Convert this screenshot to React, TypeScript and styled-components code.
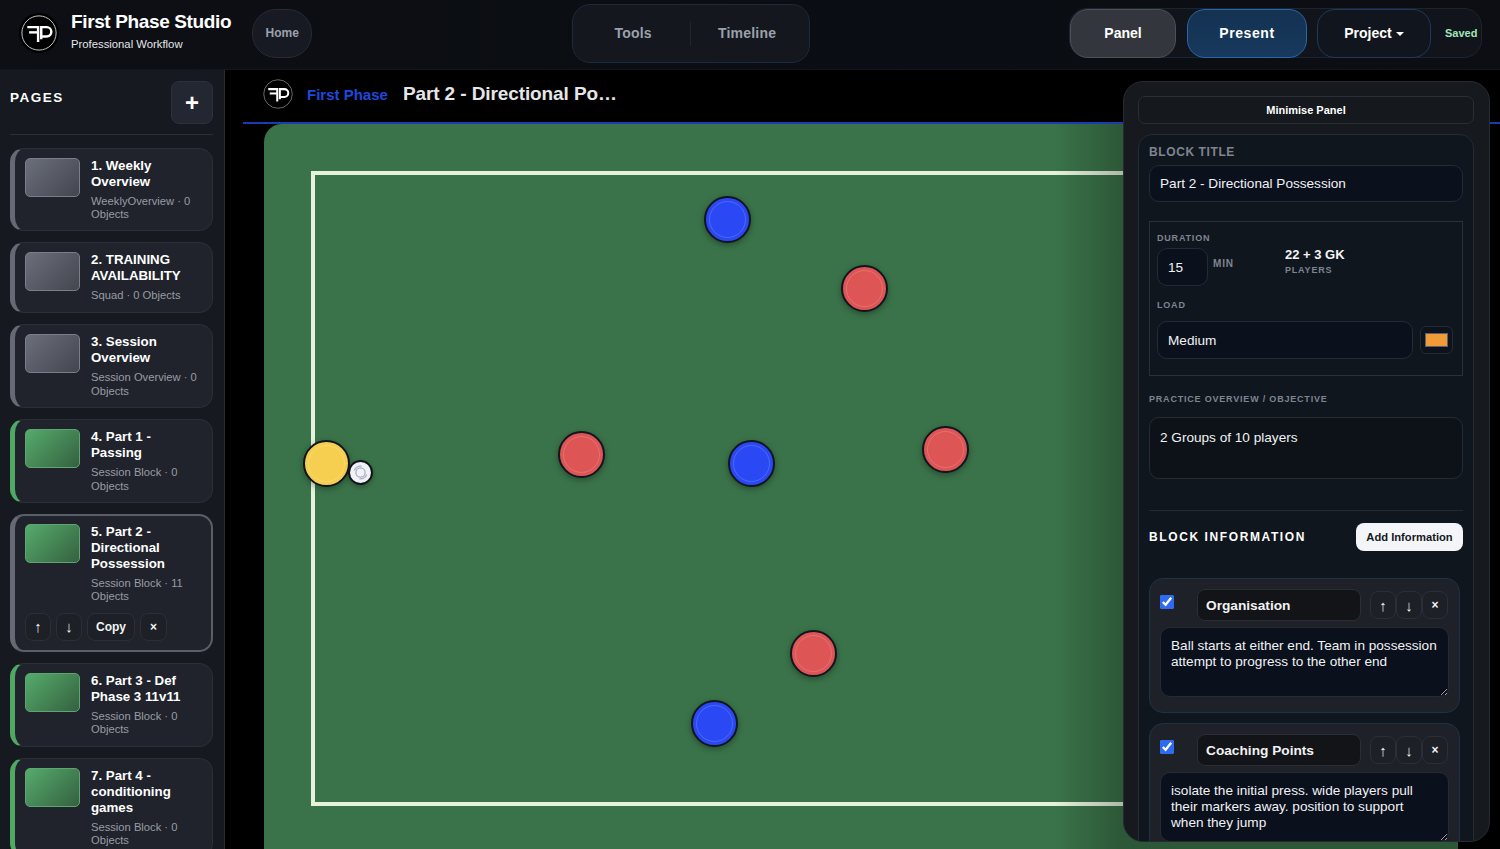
import React from "react";
import styled, { createGlobalStyle } from "styled-components";

const GlobalStyle = createGlobalStyle`
  * {
    box-sizing: border-box;
  }
  html,
  body {
    margin: 0;
    height: 100%;
    overflow: hidden;
    background: #000;
    font-family: "Liberation Sans", Arial, sans-serif;
    color: #fff;
  }
`;

interface IPage {
  title: string;
  meta: string;
  kind: "grey" | "green";
  selected?: boolean;
}

interface IToken {
  kind: "red" | "blue" | "yellow";
  x: number;
  y: number;
}

const pages: IPage[] = [
  { title: "1. Weekly Overview", meta: "WeeklyOverview · 0 Objects", kind: "grey" },
  { title: "2. TRAINING AVAILABILITY", meta: "Squad · 0 Objects", kind: "grey" },
  { title: "3. Session Overview", meta: "Session Overview · 0 Objects", kind: "grey" },
  { title: "4. Part 1 - Passing", meta: "Session Block · 0 Objects", kind: "green" },
  {
    title: "5. Part 2 - Directional Possession",
    meta: "Session Block · 11 Objects",
    kind: "green",
    selected: true,
  },
  { title: "6. Part 3 - Def Phase 3 11v11", meta: "Session Block · 0 Objects", kind: "green" },
  { title: "7. Part 4 - conditioning games", meta: "Session Block · 0 Objects", kind: "green" },
];

// positions are relative to the board's top left corner
const tokens: IToken[] = [
  { kind: "blue", x: 463, y: 95 },
  { kind: "red", x: 600, y: 164 },
  { kind: "red", x: 317, y: 330 },
  { kind: "blue", x: 487, y: 339 },
  { kind: "red", x: 681, y: 325 },
  { kind: "red", x: 549, y: 529 },
  { kind: "blue", x: 450, y: 599 },
  { kind: "yellow", x: 62, y: 339 },
];

const tokenColors = { red: "#dd5555", blue: "#2a49f5", yellow: "#f6cf50" };

const Page = styled.div`
  display: flex;
  flex-direction: column;
  width: 1500px;
  height: 849px;
  overflow: hidden;
`;

const TopBar = styled.header`
  display: flex;
  align-items: center;
  justify-content: space-between;
  flex: 0 0 70px;
  padding: 0 18px 3px 19px;
  background: linear-gradient(90deg, #0d0f14, #0a0d13 60%, #0c0e13);
  border-bottom: 1px solid #12161e;
`;

const Brand = styled.div`
  display: flex;
  align-items: center;
`;

const LogoDisc = styled.div<{ $size: number; $ring: number }>`
  display: flex;
  align-items: center;
  justify-content: center;
  flex: none;
  width: ${(p) => p.$size}px;
  height: ${(p) => p.$size}px;
  border-radius: 50%;
  background: #000;
  padding: ${(p) => p.$ring}px;
`;

const BrandText = styled.div`
  display: flex;
  flex-direction: column;
  margin: -5px 0 0 12px;
`;

const BrandName = styled.div`
  font-size: 19px;
  font-weight: 700;
  line-height: 24px;
  letter-spacing: -0.37px;
`;

const BrandSub = styled.div`
  margin-top: 3px;
  font-size: 11.3px;
  line-height: 15px;
  color: #e4e6ea;
`;

const HomeButton = styled.button`
  width: 60px;
  height: 49px;
  margin-left: 21px;
  padding: 0;
  border: 1px solid #262b35;
  border-radius: 24px;
  background: #171a22;
  color: #9ba1ad;
  font: 700 12px "Liberation Sans", sans-serif;
`;

const CenterTabs = styled.div`
  display: flex;
  align-items: center;
  width: 238px;
  height: 59px;
  border: 1px solid #1c2a3e;
  border-radius: 18px;
  background: #14171d;
`;

const CenterTab = styled.div<{ $divided?: boolean }>`
  flex: 1;
  height: 25px;
  padding: ${(p) => (p.$divided ? "0 5px 0 0" : "0 0 0 4px")};
  font-size: 14px;
  font-weight: 700;
  line-height: 25px;
  letter-spacing: 0.2px;
  text-align: center;
  color: #9ba1ab;
  border-left: ${(p) => (p.$divided ? "1px solid #1f242d" : "none")};
`;

const Actions = styled.div`
  display: flex;
  align-items: center;
  height: 50px;
  border: 1px solid #1a2533;
  border-radius: 18px;
  background: #11141a;
`;

const ActionButton = styled.button<{ $variant: "panel" | "present" | "project" }>`
  height: 49px;
  border-radius: 18px;
  color: #fff;
  font: 700 14px "Liberation Sans", sans-serif;
  ${(p) =>
    p.$variant === "panel" &&
    "width: 106px; background: #33363d; border: 1px solid #4c5058;"}
  ${(p) =>
    p.$variant === "present" &&
    "width: 120px; margin-left: 11px; letter-spacing: 0.6px; background: linear-gradient(180deg, #143252, #17395d); border: 1px solid #2a67a8;"}
  ${(p) =>
    p.$variant === "project" &&
    "width: 114px; margin-left: 10px; background: #11151d; border: 1px solid #1f3a5c;"}
`;

const Caret = styled.span`
  display: inline-block;
  margin-left: 4px;
  vertical-align: 2px;
  border-left: 4px solid transparent;
  border-right: 4px solid transparent;
  border-top: 4px solid #fff;
`;

const SavedTag = styled.span`
  width: 50px;
  padding-left: 14px;
  font-size: 11px;
  font-weight: 700;
  color: #a4e6bb;
  white-space: nowrap;
`;

const Body = styled.div`
  position: relative;
  display: flex;
  flex: 1;
  min-height: 0;
`;

const Sidebar = styled.aside`
  display: flex;
  flex-direction: column;
  flex: 0 0 225px;
  padding: 11px 11px 0 10px;
  overflow: hidden;
  background: #16191f;
  border-right: 1px solid #262a32;
`;

const SidebarHead = styled.div`
  display: flex;
  justify-content: space-between;
  flex: none;
  height: 54px;
  margin-bottom: 12.6px;
  border-bottom: 1px solid #2a2e36;
`;

const SidebarTitle = styled.div`
  margin-top: 10px;
  font-size: 13.5px;
  font-weight: 700;
  letter-spacing: 1.5px;
  line-height: 14px;
`;

const AddPage = styled.button`
  width: 42px;
  height: 43px;
  border: 1px solid #2d313b;
  border-radius: 8px;
  background: #232732;
  color: #fff;
  font: 700 24px/1 "Liberation Sans", sans-serif;
  padding: 0;
`;

const PageList = styled.div`
  display: flex;
  flex-direction: column;
  flex: none;
  gap: 11px;
`;

const PageCard = styled.div<{ $kind: string; $selected?: boolean }>`
  flex: none;
  min-height: 71px;
  padding: ${(p) => (p.$selected ? "8px 10px 9px 10px" : "9px 10px 9px 10px")};
  border: ${(p) => (p.$selected ? "2px solid #5a5e66" : "1px solid #2b2f38")};
  border-left: 5px solid ${(p) => (p.$kind === "green" && !p.$selected ? "#4fa864" : "#666a74")};
  border-radius: 14px;
  background: #20232b;
`;

const CardRow = styled.div`
  display: flex;
  gap: 11px;
`;

const Thumb = styled.div<{ $kind: string }>`
  flex: 0 0 55px;
  height: 39px;
  border-radius: 5px;
  border: 1px solid ${(p) => (p.$kind === "green" ? "#5da672" : "#7a7e88")};
  background: ${(p) =>
    p.$kind === "green"
      ? "linear-gradient(135deg, #55ab6c, #35613f)"
      : "linear-gradient(135deg, #6b6f7a, #43464f)"};
`;

const CardTitle = styled.div`
  font-size: 13.3px;
  font-weight: 700;
  line-height: 16px;
`;

const CardMeta = styled.div`
  margin-top: 5px;
  font-size: 11.2px;
  line-height: 13.4px;
  color: #989ca5;
`;

const CardTools = styled.div`
  display: flex;
  gap: 5px;
  margin-top: 9px;
`;

const ToolButton = styled.button<{ $width: number; $glyph?: boolean }>`
  width: ${(p) => p.$width}px;
  height: 28px;
  padding: 0;
  border: 1px solid #2b2f38;
  border-radius: 8px;
  background: #1d2027;
  color: #f1f2f4;
  font: 700 ${(p) => (p.$glyph ? 15 : 12)}px "Liberation Sans", sans-serif;
`;

const Main = styled.main`
  display: flex;
  flex-direction: column;
  flex: 1;
  min-width: 0;
  background: #000;
`;

const Heading = styled.div`
  display: flex;
  align-items: center;
  flex: 0 0 54px;
  margin-left: 18px;
  padding: 0 0 4px 20px;
  border-bottom: 2px solid #1b3bb0;
`;

const Breadcrumb = styled.span`
  margin: 1px 0 0 14px;
  font-size: 15px;
  font-weight: 700;
  color: #1f48dd;
`;

const HeadingTitle = styled.h1`
  margin: 0 0 0 15px;
  font-size: 19px;
  font-weight: 700;
  line-height: 24px;
  letter-spacing: -0.1px;
  color: #e6e6e8;
  white-space: nowrap;
`;

const Board = styled.div`
  position: relative;
  flex: 0 0 800px;
  margin: 0 42px 0 39px;
  border-radius: 18px 0 0 18px;
  background: #3a7349;

  /* the floating panel's soft shade falling over the pitch */
  &::after {
    content: "";
    position: absolute;
    inset: 0;
    background: linear-gradient(90deg, transparent 790px, rgba(0, 0, 0, 0.24) 859px);
    pointer-events: none;
  }
`;

const PitchLines = styled.div`
  position: absolute;
  left: 47px;
  top: 47px;
  width: 1000px;
  height: 635px;
  border: 4px solid #e6f2dc;
`;

const Token = styled.div<{ $kind: IToken["kind"] }>`
  position: absolute;
  width: 47px;
  height: 47px;
  margin: -23.5px 0 0 -23.5px;
  border-radius: 50%;
  border: 2.5px solid #10151f;
  background: ${(p) => tokenColors[p.$kind]};
  box-shadow: 0 2px 6px rgba(0, 0, 0, 0.35);

  &::after {
    content: "";
    position: absolute;
    inset: 3px;
    border-radius: 50%;
    border: 1px solid rgba(255, 255, 255, 0.16);
  }
`;

const Ball = styled.div`
  position: absolute;
  left: 84px;
  top: 336px;
  display: flex;
  align-items: center;
  justify-content: center;
  width: 25px;
  height: 25px;
  border-radius: 50%;
  border: 2px solid #10141c;
  background: #f1f2f6;
  box-shadow: 0 2px 5px rgba(0, 0, 0, 0.3);
`;

const SidePanel = styled.section`
  position: absolute;
  left: 1123px;
  top: 11px;
  width: 367px;
  height: 761px;
  padding: 14px 15px 0 14px;
  overflow: hidden;
  border: 1px solid #262a31;
  border-radius: 20px;
  background: #16191e;
`;

const MinimiseButton = styled.button`
  display: block;
  width: 100%;
  height: 28px;
  padding: 0;
  border: 1px solid #2a2e36;
  border-radius: 7px;
  background: #15181d;
  color: #fff;
  font: 700 11px "Liberation Sans", sans-serif;
`;

const BlockSection = styled.div`
  margin-top: 10px;
  padding: 10px 10px 20px;
  border: 1px solid #252b34;
  border-radius: 14px;
  background: #10161e;
`;

const FieldLabel = styled.label<{ $size?: number; $spacing?: number }>`
  display: block;
  font-size: ${(p) => p.$size ?? 9}px;
  font-weight: 700;
  line-height: 14px;
  letter-spacing: ${(p) => p.$spacing ?? 0.8}px;
  color: #7f8590;
  white-space: nowrap;
`;

const TextField = styled.input<{ $width?: string; $height?: number }>`
  display: block;
  width: ${(p) => p.$width ?? "100%"};
  height: ${(p) => p.$height ?? 38}px;
  padding: 0 10px;
  border: 1px solid #252b36;
  border-radius: 10px;
  outline: none;
  background: #0b101d;
  color: #f1f2f4;
  font: 13.6px "Liberation Sans", sans-serif;
`;

const BlockTitleField = styled(TextField)`
  margin-top: 6px;
`;

const StatsBox = styled.div`
  margin-top: 19px;
  height: 155px;
  padding: 9px 9px 0 7px;
  border: 1px solid #2a303a;
`;

const DurationRow = styled.div`
  display: flex;
  margin-top: 3px;
`;

const MinLabel = styled(FieldLabel)`
  margin: 9px 0 0 5px;
  width: 72px;
`;

const PlayersCol = styled.div`
  margin-top: -1px;
`;

const PlayersValue = styled.div`
  margin-bottom: 1px;
  font-size: 13px;
  font-weight: 700;
  line-height: 15px;
  color: #f4f5f6;
`;

const LoadLabel = styled(FieldLabel)`
  margin-top: 12px;
`;

const LoadRow = styled.div`
  display: flex;
  align-items: center;
  gap: 7px;
  margin-top: 9px;
`;

const Swatch = styled.div`
  display: flex;
  align-items: center;
  justify-content: center;
  flex: 0 0 33px;
  height: 28px;
  border: 1px solid #252b36;
  border-radius: 6px;
  background: #0d121c;

  span {
    display: block;
    width: 23px;
    height: 14px;
    background: #f09a38;
    border: 1px solid #5a5f68;
  }
`;

const Multiline = styled.textarea<{ $height: number; $dark?: boolean }>`
  display: block;
  width: 100%;
  height: ${(p) => p.$height}px;
  padding: ${(p) => (p.$dark ? "12px" : "10px")} 10px 10px;
  border: 1px solid #252b36;
  border-radius: 10px;
  outline: none;
  background: ${(p) => (p.$dark ? "#0d1219" : "#0b101d")};
  color: #f1f2f4;
  font: 13.6px/16px "Liberation Sans", sans-serif;
  overflow: hidden;
  resize: ${(p) => (p.$dark ? "none" : "vertical")};
`;

const OverviewLabel = styled(FieldLabel)`
  margin-top: 16px;
`;

const OverviewField = styled(Multiline)`
  margin-top: 11px;
`;

const SectionRule = styled.hr`
  margin: 31px 0 12px;
  border: 0;
  border-top: 1px solid #242931;
`;

const InfoHead = styled.div`
  display: flex;
  align-items: center;
  justify-content: space-between;
  margin-bottom: 27px;
`;

const InfoTitle = styled.div`
  font-size: 12px;
  font-weight: 700;
  letter-spacing: 1.6px;
`;

const AddInfoButton = styled.button`
  width: 107px;
  height: 28px;
  padding: 0;
  border: 0;
  border-radius: 8px;
  background: #f3f5f9;
  color: #15181d;
  font: 700 11.2px "Liberation Sans", sans-serif;
`;

const InfoCard = styled.div`
  width: 311px;
  margin-bottom: 10px;
  padding: 10px 10px 15px;
  border: 1px solid #1e3146;
  border-radius: 14px;
  background: #1e2228;
`;

const InfoRow = styled.div`
  display: flex;
  align-items: center;
  margin-bottom: 6px;
`;

const InfoCheck = styled.input`
  flex: none;
  width: 14px;
  height: 14px;
  margin: -6px 23px 0 0;
  accent-color: #2f6bf0;
`;

const InfoName = styled.input`
  flex: none;
  width: 164px;
  min-width: 0;
  height: 32px;
  padding: 0 8px;
  border: 1px solid #2a2e36;
  border-radius: 8px;
  outline: none;
  background: #121417;
  color: #f1f2f4;
  font: 700 13.7px "Liberation Sans", sans-serif;
`;

const InfoTools = styled.div`
  display: flex;
  flex: none;
  margin-left: 9px;
`;

const InfoTool = styled.button<{ $glyph?: boolean }>`
  width: 26px;
  height: 28px;
  padding: 0;
  border: 1px solid #2b2f38;
  border-radius: 8px;
  background: #1d2027;
  color: #f1f2f4;
  font: 700 ${(p) => (p.$glyph ? 15 : 12)}px "Liberation Sans", sans-serif;
`;

function Logo({ size, ring }: { size: number; ring?: boolean }) {
  return (
    <svg width={size} height={size} viewBox="0 0 40 40" fill="none">
      <circle cx="20" cy="20" r="19" stroke={ring ? "#d8d8d8" : "#8a8a8a"} strokeWidth="1" />
      <g stroke="#fff" strokeWidth="2.7">
        <path d="M7 13.5H19V30" />
        <path d="M9 19.3H19" />
        <path d="M22.5 27V13.5H28.5a5 5 0 0 1 0 10.4H22.5" />
      </g>
    </svg>
  );
}

function BallMark() {
  return (
    <svg width="17" height="17" viewBox="0 0 17 17" fill="none" stroke="#a9b1c4" strokeWidth="1.3">
      <circle cx="8.5" cy="8.5" r="4.6" />
      <path d="M2.4 6.5A6.4 6.4 0 0 1 9.5 2.2M14.6 10.5A6.4 6.4 0 0 1 7.5 14.8" />
    </svg>
  );
}

function PageItem({ page }: { page: IPage }) {
  return (
    <PageCard $kind={page.kind} $selected={page.selected}>
      <CardRow>
        <Thumb $kind={page.kind} />
        <div>
          <CardTitle>{page.title}</CardTitle>
          <CardMeta>{page.meta}</CardMeta>
        </div>
      </CardRow>
      {page.selected && (
        <CardTools>
          <ToolButton $width={26} $glyph>
            ↑
          </ToolButton>
          <ToolButton $width={26} $glyph>
            ↓
          </ToolButton>
          <ToolButton $width={48}>Copy</ToolButton>
          <ToolButton $width={27}>×</ToolButton>
        </CardTools>
      )}
    </PageCard>
  );
}

function InfoBlock({ name, text, height }: { name: string; text: string; height: number }) {
  return (
    <InfoCard>
      <InfoRow>
        <InfoCheck type="checkbox" checked readOnly />
        <InfoName value={name} readOnly />
        <InfoTools>
          <InfoTool $glyph>↑</InfoTool>
          <InfoTool $glyph>↓</InfoTool>
          <InfoTool>×</InfoTool>
        </InfoTools>
      </InfoRow>
      <Multiline $height={height} value={text} readOnly />
    </InfoCard>
  );
}

export default function App() {
  return (
    <Page>
      <GlobalStyle />
      <TopBar>
        <Brand>
          <LogoDisc $size={40} $ring={2}>
            <Logo size={36} ring />
          </LogoDisc>
          <BrandText>
            <BrandName>First Phase Studio</BrandName>
            <BrandSub>Professional Workflow</BrandSub>
          </BrandText>
          <HomeButton>Home</HomeButton>
        </Brand>
        <CenterTabs>
          <CenterTab>Tools</CenterTab>
          <CenterTab $divided>Timeline</CenterTab>
        </CenterTabs>
        <Actions>
          <ActionButton $variant="panel">Panel</ActionButton>
          <ActionButton $variant="present">Present</ActionButton>
          <ActionButton $variant="project">
            Project
            <Caret />
          </ActionButton>
          <SavedTag>Saved</SavedTag>
        </Actions>
      </TopBar>
      <Body>
        <Sidebar>
          <SidebarHead>
            <SidebarTitle>PAGES</SidebarTitle>
            <AddPage>+</AddPage>
          </SidebarHead>
          <PageList>
            {pages.map((page) => (
              <PageItem key={page.title} page={page} />
            ))}
          </PageList>
        </Sidebar>
        <Main>
          <Heading>
            <Logo size={30} />
            <Breadcrumb>First Phase</Breadcrumb>
            <HeadingTitle>Part 2 - Directional Po…</HeadingTitle>
          </Heading>
          <Board>
            <PitchLines />
            {tokens.map((token) => (
              <Token
                key={`${token.x}-${token.y}`}
                $kind={token.kind}
                style={{ left: token.x, top: token.y }}
              />
            ))}
            <Ball>
              <BallMark />
            </Ball>
          </Board>
        </Main>
        <SidePanel>
          <MinimiseButton>Minimise Panel</MinimiseButton>
          <BlockSection>
            <FieldLabel $size={12} $spacing={0.6}>
              BLOCK TITLE
            </FieldLabel>
            <BlockTitleField $height={37} value="Part 2 - Directional Possession" readOnly />
            <StatsBox>
              <FieldLabel>DURATION</FieldLabel>
              <DurationRow>
                <TextField $width="51px" value="15" readOnly />
                <MinLabel $size={10}>MIN</MinLabel>
                <PlayersCol>
                  <PlayersValue>22 + 3 GK</PlayersValue>
                  <FieldLabel>PLAYERS</FieldLabel>
                </PlayersCol>
              </DurationRow>
              <LoadLabel>LOAD</LoadLabel>
              <LoadRow>
                <TextField $width="256px" value="Medium" readOnly />
                <Swatch>
                  <span />
                </Swatch>
              </LoadRow>
            </StatsBox>
            <OverviewLabel>PRACTICE OVERVIEW / OBJECTIVE</OverviewLabel>
            <OverviewField $dark $height={62} value="2 Groups of 10 players" readOnly />
            <SectionRule />
            <InfoHead>
              <InfoTitle>BLOCK INFORMATION</InfoTitle>
              <AddInfoButton>Add Information</AddInfoButton>
            </InfoHead>
            <InfoBlock
              name="Organisation"
              text="Ball starts at either end. Team in possession attempt to progress to the other end"
              height={70}
            />
            <InfoBlock
              name="Coaching Points"
              text="isolate the initial press. wide players pull their markers away. position to support when they jump"
              height={70}
            />
          </BlockSection>
        </SidePanel>
      </Body>
    </Page>
  );
}
